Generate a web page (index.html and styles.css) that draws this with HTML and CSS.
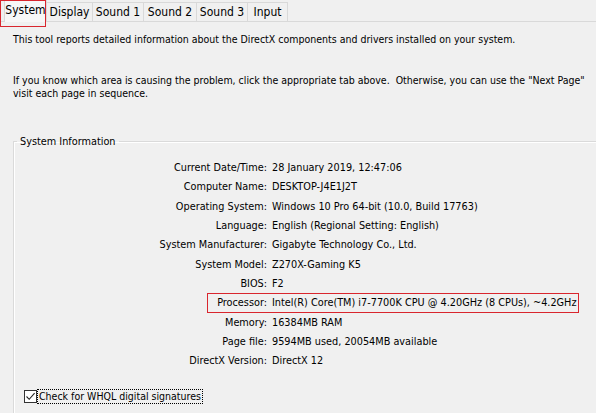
FILE: index.html
```html
<!DOCTYPE html>
<html>
<head>
<meta charset="utf-8">
<link rel="stylesheet" href="styles.css">
</head>
<body>
<div class="frame">
<div class="tabs">
  <div class="tab sel w1">System<span class="mark tabmark"></span></div>
  <div class="tab w2">Display</div>
  <div class="tab w3">Sound 1</div>
  <div class="tab w4">Sound 2</div>
  <div class="tab w5">Sound 3</div>
  <div class="tab w6">Input</div>
</div>
<div class="panel">
  <p class="intro">This tool reports detailed information about the DirectX components and drivers installed on your system.</p>
  <p class="intro second">If you know which area is causing the problem, click the appropriate tab above.&nbsp; Otherwise, you can use the "Next Page"<br>visit each page in sequence.</p>
  <fieldset class="group">
    <legend>System Information</legend>
    <div class="grid">
      <div class="lbl">Current Date/Time:</div><div class="val">28 January 2019, 12:47:06</div>
      <div class="lbl">Computer Name:</div><div class="val">DESKTOP-J4E1J2T</div>
      <div class="lbl">Operating System:</div><div class="val">Windows 10 Pro 64-bit (10.0, Build 17763)</div>
      <div class="lbl">Language:</div><div class="val">English (Regional Setting: English)</div>
      <div class="lbl">System Manufacturer:</div><div class="val">Gigabyte Technology Co., Ltd.</div>
      <div class="lbl">System Model:</div><div class="val">Z270X-Gaming K5</div>
      <div class="lbl">BIOS:</div><div class="val">F2</div>
      <div class="lbl proc">Processor:<span class="mark procmark"></span></div><div class="val">Intel(R) Core(TM) i7-7700K CPU @ 4.20GHz (8 CPUs), ~4.2GHz</div>
      <div class="lbl">Memory:</div><div class="val">16384MB RAM</div>
      <div class="lbl">Page file:</div><div class="val">9594MB used, 20054MB available</div>
      <div class="lbl">DirectX Version:</div><div class="val">DirectX 12</div>
    </div>
    <label class="check">
      <span class="box"><svg width="11" height="11" viewBox="0 0 11 11"><path d="M1.5 5.5 L4.2 8.3 L9.6 2.2" fill="none" stroke="#222" stroke-width="1.1"/></svg></span>
      <span class="cap">Check for WHQL digital signatures</span>
    </label>
  </fieldset>
</div>
</div>
</body>
</html>
```
FILE: styles.css
```css
html, body {
  margin: 0;
  padding: 0;
  background: #f0f0f0;
}
.frame {
  width: 596px;
  height: 413px;
  overflow: hidden;
  position: relative;
  color: #000;
  font-family: "DejaVu Sans Condensed", "DejaVu Sans", sans-serif;
  font-stretch: condensed;
  font-size: 10.8px;
}
.tabs {
  display: flex;
  height: 19px;
  padding: 2px 0 0 4px;
  border-bottom: 1px solid #d9d9d9;
  box-sizing: content-box;
  position: relative;
}
.tab {
  box-sizing: border-box;
  height: 19px;
  border: 1px solid #d9d9d9;
  border-bottom: none;
  border-left: none;
  text-align: center;
  line-height: 18px;
  font-size: 12px;
  background: #f0f0f0;
  white-space: nowrap;
}
.tab.sel {
  position: relative;
  margin-top: -2px;
  height: 22px;
  border-left: 1px solid #d9d9d9;
  background: #f7f7f7;
  line-height: 18px;
  z-index: 1;
}
.w1 { width: 43px; }
.w2 { width: 46px; }
.w3 { width: 51px; }
.w4 { width: 53px; }
.w5 { width: 51px; }
.w6 { width: 40px; }
.mark {
  position: absolute;
  border: 1px solid #d9262e;
  box-sizing: border-box;
}
.tabmark {
  left: -5px;
  top: -1px;
  width: 46px;
  height: 27px;
}
.panel {
  padding: 0 0 0 13px;
}
.intro {
  margin: 0;
  line-height: 13px;
  font-size: 10.5px;
  white-space: nowrap;
}
.intro:first-child {
  margin-top: 11px;
}
.intro.second {
  margin-top: 28px;
}
.group {
  margin: 35px 0 0 0;
  padding: 0;
  width: 640px;
  border: 1px solid #dadada;
  border-right: none;
  box-shadow: inset 1px 1px 0 #fff;
  height: 320px;
}
.group legend {
  margin-left: 3px;
  padding: 0 3px;
  line-height: 13px;
}
.grid {
  display: grid;
  grid-template-columns: 253px auto;
  column-gap: 5px;
  margin-top: 13px;
}
.lbl, .val {
  height: 19.35px;
  line-height: 14px;
  white-space: nowrap;
}
.lbl {
  text-align: right;
}
.proc {
  position: relative;
}
.procmark {
  left: 193px;
  top: -3px;
  width: 372px;
  height: 20px;
}
.check {
  display: flex;
  align-items: center;
  margin: 16px 0 0 10px;
  gap: 1px;
}
.box {
  width: 13px;
  height: 13px;
  box-sizing: border-box;
  border: 1px solid #333;
  background: #fff;
  display: flex;
  align-items: center;
  justify-content: center;
}
.box svg { display: block; }
.cap {
  outline: 1px dotted #000;
  padding: 0 1px;
  line-height: 13px;
  font-size: 10.5px;
}
```
